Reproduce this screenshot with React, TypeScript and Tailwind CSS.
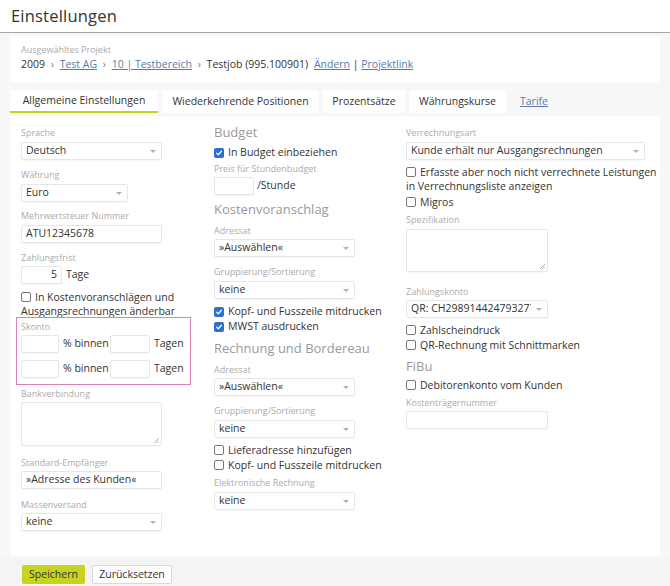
import React from 'react'

function Label({ children, className = '' }: { children: React.ReactNode; className?: string }) {
  return <div className={`text-[9px] leading-[12px] text-[#ababab] ${className}`}>{children}</div>
}

function Heading({ children, className = '' }: { children: React.ReactNode; className?: string }) {
  return <div className={`text-[13px] leading-[16px] text-[#9a9a9a] ${className}`}>{children}</div>
}

function Box({ checked }: { checked?: boolean }) {
  if (checked) {
    return (
      <span className="mr-[4px] inline-flex h-[10px] w-[10px] translate-y-[1px] items-center justify-center rounded-[2px] bg-[#2a6fd6] align-baseline">
        <svg viewBox="0 0 10 10" className="h-[8px] w-[8px]">
          <path d="M2 5.2 L4.1 7.2 L8 2.8" fill="none" stroke="white" strokeWidth="1.6" strokeLinecap="round" strokeLinejoin="round" />
        </svg>
      </span>
    )
  }
  return (
    <span className="mr-[4px] inline-block h-[10px] w-[10px] translate-y-[1px] rounded-[2px] border border-[#767676] bg-white align-baseline" />
  )
}

function Check({ checked, children, className = '' }: { checked?: boolean; children: React.ReactNode; className?: string }) {
  return (
    <div className={`whitespace-nowrap leading-[15px] ${className}`}>
      <Box checked={checked} />
      {children}
    </div>
  )
}

function Select({ value, w, className = '' }: { value: string; w: string; className?: string }) {
  return (
    <div
      className={`relative flex h-[18px] items-center overflow-hidden rounded-[2px] border border-[#e6e6e6] bg-white pl-[4px] shadow-[0_1px_1px_rgba(0,0,0,0.03)] ${w} ${className}`}
    >
      <span className="whitespace-nowrap">{value}</span>
      <span className="absolute right-0 top-0 flex h-full w-[16px] items-center justify-center bg-white">
        <span className="h-0 w-0 border-x-[3px] border-t-[3px] border-x-transparent border-t-[#b0b0b0]" />
      </span>
    </div>
  )
}

function Input({ value = '', w, className = '', right }: { value?: string; w: string; className?: string; right?: boolean }) {
  return (
    <div
      className={`flex h-[18px] items-center rounded-[2px] border border-[#e6e6e6] bg-white px-[4px] shadow-[0_1px_1px_rgba(0,0,0,0.03)] ${right ? 'justify-end' : ''} ${w} ${className}`}
    >
      {value}
    </div>
  )
}

function TextArea({ w, h, className = '' }: { w: string; h: string; className?: string }) {
  return (
    <div className={`relative rounded-[2px] border border-[#e6e6e6] bg-white shadow-[0_1px_1px_rgba(0,0,0,0.03)] ${w} ${h} ${className}`}>
      <svg viewBox="0 0 6 6" className="absolute bottom-[2px] right-[2px] h-[6px] w-[6px]">
        <path d="M1 6 L6 1 M3.5 6 L6 3.5" stroke="#999" strokeWidth="0.8" />
      </svg>
    </div>
  )
}

function SkontoRow({ className = '' }: { className?: string }) {
  return (
    <div className={`flex items-center whitespace-nowrap ${className}`}>
      <Input w="w-[38px]" />
      <span className="ml-[4px] w-[43px]">% binnen</span>
      <Input w="w-[40px]" className="ml-[4px]" />
      <span className="ml-[4px]">Tagen</span>
    </div>
  )
}

export default function App() {
  return (
    <div className="min-h-screen bg-[#f7f7f7] font-['Open_Sans',sans-serif] text-[10.5px] text-[#333]">
      {/* Header */}
      <header className="flex h-[33px] items-center border-b border-[#a6a6a6] bg-white px-[11px]">
        <h1 className="text-[16.5px] leading-none tracking-[0.2px] text-[#333]">Einstellungen</h1>
      </header>

      <div className="px-[10px]">
        {/* Project */}
        <div className="mt-[3px] h-[46px] bg-white px-[11px] pt-[8px]">
          <Label>Ausgewähltes Projekt</Label>
          <div className="mt-[1px] whitespace-nowrap leading-[15px]">
            2009 <span className="mx-[3px] text-[#777]">›</span>{' '}
            <a className="text-[#5a7ba6] underline">Test AG</a> <span className="mx-[3px] text-[#777]">›</span>{' '}
            <a className="text-[#5a7ba6] underline">10 | Testbereich</a> <span className="mx-[3px] text-[#777]">›</span> Testjob
            (995.100901) <a className="ml-[3px] text-[#5a7ba6] underline">Ändern</a> |{' '}
            <a className="text-[#5a7ba6] underline">Projektlink</a>
          </div>
        </div>

        {/* Tabs */}
        <div className="mt-[8px] flex h-[23px] gap-[4px] whitespace-nowrap">
          <div className="flex w-[148px] items-center justify-center border-b-2 border-[#c4d11e] bg-white">
            Allgemeine Einstellungen
          </div>
          <div className="flex w-[157px] items-center justify-center bg-white">Wiederkehrende Positionen</div>
          <div className="flex w-[82px] items-center justify-center bg-white">Prozentsätze</div>
          <div className="flex w-[97px] items-center justify-center bg-white">Währungskurse</div>
          <div className="flex items-center px-[10px]">
            <a className="text-[#5a7ba6] underline">Tarife</a>
          </div>
        </div>

        {/* Form */}
        <div className="mt-[3px] grid h-[440px] grid-cols-[193px_192px_1fr] bg-white pl-[11px] pt-[11px]">
          {/* Column 1 */}
          <div className="flex flex-col items-start">
            <Label>Sprache</Label>
            <Select value="Deutsch" w="w-[141px]" className="mt-[3px]" />
            <Label className="mt-[9px]">Währung</Label>
            <Select value="Euro" w="w-[107px]" className="mt-[3px]" />
            <Label className="mt-[8px]">Mehrwertsteuer Nummer</Label>
            <Input value="ATU12345678" w="w-[141px]" className="mt-[3px]" />
            <Label className="mt-[9px]">Zahlungsfrist</Label>
            <div className="mt-[2px] flex items-center">
              <Input value="5" w="w-[41px]" right />
              <span className="ml-[4px]">Tage</span>
            </div>
            <div className="mt-[6px] whitespace-nowrap leading-[14px]">
              <Box />
              In Kostenvoranschlägen und
              <br />
              Ausgangsrechnungen änderbar
            </div>
            <div className="-ml-[5px] mt-[-1px] w-[175px] border border-[#e07fb4] pb-[6px] pl-[4px] pt-[3px]">
              <Label>Skonto</Label>
              <SkontoRow className="mt-[2px]" />
              <SkontoRow className="mt-[7px]" />
            </div>
            <Label className="mt-[3px]">Bankverbindung</Label>
            <TextArea w="w-[141px]" h="h-[44px]" className="mt-[2px]" />
            <Label className="mt-[11px]">Standard-Empfänger</Label>
            <Input value="»Adresse des Kunden«" w="w-[141px]" className="mt-[2px]" />
            <Label className="mt-[10px]">Massenversand</Label>
            <Select value="keine" w="w-[141px]" className="mt-[2px]" />
          </div>

          {/* Column 2 */}
          <div className="flex flex-col items-start">
            <Heading className="mt-[-3px]">Budget</Heading>
            <Check checked className="mt-[5px] leading-[14px]">
              In Budget einbeziehen
            </Check>
            <Label className="mt-[3px]">Preis für Stundenbudget</Label>
            <div className="mt-[2px] flex items-center">
              <Input w="w-[40px]" />
              <span className="ml-[3px]">/Stunde</span>
            </div>
            <Heading className="mt-[6px]">Kostenvoranschlag</Heading>
            <Label className="mt-[8px]">Adressat</Label>
            <Select value="»Auswählen«" w="w-[141px]" className="mt-[2px]" />
            <Label className="mt-[9px]">Gruppierung/Sortierung</Label>
            <Select value="keine" w="w-[141px]" className="mt-[3px]" />
            <Check checked className="mt-[5px]">
              Kopf- und Fusszeile mitdrucken
            </Check>
            <Check checked>MWST ausdrucken</Check>
            <Heading className="mt-[6px]">Rechnung und Bordereau</Heading>
            <Label className="mt-[8px]">Adressat</Label>
            <Select value="»Auswählen«" w="w-[141px]" className="mt-[2px]" />
            <Label className="mt-[9px]">Gruppierung/Sortierung</Label>
            <Select value="keine" w="w-[141px]" className="mt-[3px]" />
            <Check className="mt-[5px]">Lieferadresse hinzufügen</Check>
            <Check>Kopf- und Fusszeile mitdrucken</Check>
            <Label className="mt-[4px]">Elektronische Rechnung</Label>
            <Select value="keine" w="w-[141px]" className="mt-[3px]" />
          </div>

          {/* Column 3 */}
          <div className="flex flex-col items-start">
            <Label>Verrechnungsart</Label>
            <Select value="Kunde erhält nur Ausgangsrechnungen" w="w-[239px]" className="mt-[3px]" />
            <div className="mt-[5px] whitespace-nowrap leading-[14px]">
              <Box />
              Erfasste aber noch nicht verrechnete Leistungen
              <br />
              in Verrechnungsliste anzeigen
            </div>
            <Check className="mt-[2px] leading-[14px]">Migros</Check>
            <Label className="mt-[4px]">Spezifikation</Label>
            <TextArea w="w-[142px]" h="h-[43px]" className="mt-[3px]" />
            <Label className="mt-[14px]">Zahlungskonto</Label>
            <Select value="QR: CH2989144247932775300" w="w-[142px]" className="mt-[2px]" />
            <Check className="mt-[5px]">Zahlscheindruck</Check>
            <Check>QR-Rechnung mit Schnittmarken</Check>
            <Heading className="mt-[5px]">FiBu</Heading>
            <Check className="mt-[4px]">Debitorenkonto vom Kunden</Check>
            <Label className="mt-[4px]">Kostenträgernummer</Label>
            <Input w="w-[142px]" className="mt-[2px]" />
          </div>
        </div>
      </div>

      {/* Footer */}
      <footer className="mt-[1px] flex h-[30px] items-start gap-[7px] border-t border-[#fbfbe8] bg-[#f4f4f4] px-[22px] pt-[7px]">
        <button className="h-[19px] w-[63px] rounded-[2px] bg-[#c7d41f] text-[10.5px] text-[#333]">Speichern</button>
        <button className="h-[19px] w-[80px] rounded-[2px] border border-[#d9d9d9] bg-white text-[10.5px] text-[#333]">
          Zurücksetzen
        </button>
      </footer>
    </div>
  )
}
